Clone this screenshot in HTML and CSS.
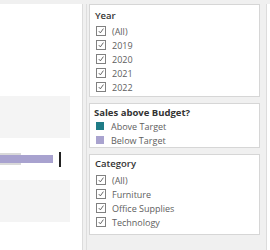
FILE: index.html
```html
<!DOCTYPE html>
<html>
<head>
<link rel="stylesheet" href="styles.css">
</head>
<body>
<div class="page">
  <div class="viz">
    <div class="band band-a"></div>
    <div class="bar-row">
      <div class="bar-track">
        <div class="bar-bg"></div>
        <div class="bar" style="width:53px"></div>
      </div>
      <div class="target"></div>
    </div>
    <div class="band band-b"></div>
  </div>
  <div class="sep"></div>
  <div class="filters">
    <div class="card">
      <div class="title">Year</div>
      <div class="item"><span class="cb"><svg viewBox="0 0 9 9"><path d="M2 4.6 L3.8 6.6 L7.2 1.8"/></svg></span>(All)</div>
      <div class="item"><span class="cb"><svg viewBox="0 0 9 9"><path d="M2 4.6 L3.8 6.6 L7.2 1.8"/></svg></span>2019</div>
      <div class="item"><span class="cb"><svg viewBox="0 0 9 9"><path d="M2 4.6 L3.8 6.6 L7.2 1.8"/></svg></span>2020</div>
      <div class="item"><span class="cb"><svg viewBox="0 0 9 9"><path d="M2 4.6 L3.8 6.6 L7.2 1.8"/></svg></span>2021</div>
      <div class="item"><span class="cb"><svg viewBox="0 0 9 9"><path d="M2 4.6 L3.8 6.6 L7.2 1.8"/></svg></span>2022</div>
    </div>
    <div class="card legend">
      <div class="title bold">Sales above Budget?</div>
      <div class="item"><span class="sw teal"></span>Above Target</div>
      <div class="item"><span class="sw purple"></span>Below Target</div>
    </div>
    <div class="card cat">
      <div class="title">Category</div>
      <div class="item"><span class="cb"><svg viewBox="0 0 9 9"><path d="M2 4.6 L3.8 6.6 L7.2 1.8"/></svg></span>(All)</div>
      <div class="item"><span class="cb"><svg viewBox="0 0 9 9"><path d="M2 4.6 L3.8 6.6 L7.2 1.8"/></svg></span>Furniture</div>
      <div class="item"><span class="cb"><svg viewBox="0 0 9 9"><path d="M2 4.6 L3.8 6.6 L7.2 1.8"/></svg></span>Office Supplies</div>
      <div class="item"><span class="cb"><svg viewBox="0 0 9 9"><path d="M2 4.6 L3.8 6.6 L7.2 1.8"/></svg></span>Technology</div>
    </div>
  </div>
  <div class="edge">
    <div class="edge-panel"></div>
  </div>
</div>
</body>
</html>
```
FILE: styles.css
```css
html, body {
  margin: 0;
  padding: 0;
  background: #f0f0f0;
  width: 270px;
  height: 250px;
  overflow: hidden;
  font-family: "Open Sans", "Liberation Sans", sans-serif;
}
.page {
  display: flex;
  height: 250px;
  padding-top: 4px;
  box-sizing: border-box;
}
.viz {
  width: 82px;
  flex: none;
  background: #fff;
  border-right: 1px solid #dcdcdc;
  padding-top: 92px;
}
.band {
  width: 70px;
  height: 42px;
  background: #f4f4f4;
}
.bar-row {
  height: 42px;
  display: flex;
  align-items: center;
}
.bar-track {
  position: relative;
  height: 12px;
  width: 53px;
}
.bar-bg {
  position: absolute;
  left: 0;
  top: 0;
  width: 21px;
  height: 12px;
  background: #d9d9d9;
}
.bar {
  position: absolute;
  left: 0;
  top: 2px;
  height: 8px;
  background: #a8a2cf;
}
.target {
  margin-left: 6px;
  width: 2px;
  height: 15px;
  background: #222;
}
.sep {
  width: 3px;
  flex: none;
  border-right: 1px solid #dedede;
}
.filters {
  width: 171px;
  flex: none;
  margin-left: 2px;
  display: flex;
  flex-direction: column;
  gap: 6px;
}
.card {
  background: #fff;
  border: 1px solid #d6d6d6;
  padding: 5px 0 2px 5px;
}
.card.legend {
  padding: 3px 0 0 4px;
}
.card.cat {
  padding: 3px 0 5px 5px;
}
.title {
  font-size: 9.5px;
  font-weight: 600;
  color: #333;
  line-height: 12px;
  margin-bottom: 2px;
}
.legend .title {
  margin-bottom: 0;
}
.cat .title {
  margin-bottom: 3px;
}
.title.bold {
  font-weight: 700;
}
.item {
  display: flex;
  align-items: center;
  height: 14px;
  font-size: 9px;
  color: #5e5e5e;
}
.cb {
  width: 8px;
  height: 8px;
  border: 1px solid #808080;
  margin: 0 6px 0 1px;
  display: flex;
}
.cb svg {
  width: 8px;
  height: 8px;
  fill: none;
  stroke: #555;
  stroke-width: 1;
}
.sw {
  width: 8px;
  height: 8px;
  margin: 0 7px 0 2px;
}
.teal { background: #1f7c86; }
.purple { background: #a9a3cf; }
.edge {
  flex: 1;
  display: flex;
  justify-content: flex-end;
}
.edge-panel {
  width: 3px;
  background: #fff;
  border-left: 1px solid #dcdcdc;
}
```
